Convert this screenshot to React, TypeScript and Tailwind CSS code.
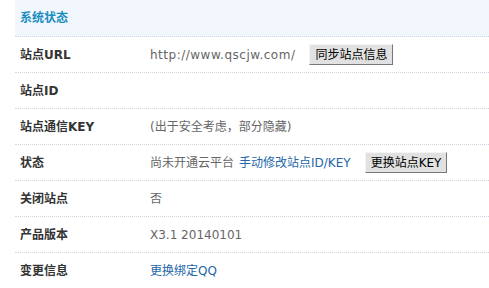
import { ReactNode } from 'react';

const font = { fontFamily: '"DejaVu Sans", "Noto Sans CJK SC", sans-serif' };

function Row({ label, children }: { label: string; children?: ReactNode }) {
  return (
    <div className="flex h-[36px] items-center border-b border-dotted border-[#cdd6df]">
      <div className="w-[135px] pl-[5px] text-[12px] font-bold text-[#333]">{label}</div>
      <div className="flex items-center text-[12px] text-[#666]">{children}</div>
    </div>
  );
}

function Btn({ children }: { children: ReactNode }) {
  return (
    <button className="ml-[14px] h-[21px] border border-t-[#f4f4f4] border-l-[#f4f4f4] border-r-[#777] border-b-[#777] bg-[#e1e1e1] px-[5px] text-[12px] leading-none text-black">
      {children}
    </button>
  );
}

export default function App() {
  return (
    <div className="h-[288px] w-[489px] overflow-hidden bg-white pl-[15px]" style={font}>
      <div className="flex h-[37px] items-center border-b border-dotted border-[#c9d6e2] bg-[#f1f7fd] pl-[5px] text-[12px] font-bold text-[#1a8cc0]">
        系统状态
      </div>
      <Row label="站点URL">
        <span className="tracking-[0.5px]">http://www.qscjw.com/</span>
        <Btn>同步站点信息</Btn>
      </Row>
      <Row label="站点ID" />
      <Row label="站点通信KEY">
        <span>(出于安全考虑，部分隐藏)</span>
      </Row>
      <Row label="状态">
        <span>尚未开通云平台</span>
        <a className="ml-[5px] text-[#2366a8]">手动修改站点ID/KEY</a>
        <Btn>更换站点KEY</Btn>
      </Row>
      <Row label="关闭站点">
        <span>否</span>
      </Row>
      <Row label="产品版本">
        <span>X3.1 20140101</span>
      </Row>
      <Row label="变更信息">
        <a className="text-[#2366a8]">更换绑定QQ</a>
      </Row>
    </div>
  );
}
